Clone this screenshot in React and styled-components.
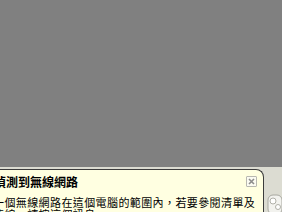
import styled, { createGlobalStyle } from 'styled-components';

const Global = createGlobalStyle`
  html, body {
    margin: 0;
    padding: 0;
    width: 282px;
    height: 212px;
    overflow: hidden;
    background: #808080;
  }
`;

const Screen = styled.div`
  width: 282px;
  height: 212px;
  display: flex;
  flex-direction: column;
  overflow: hidden;
  background: #808080;
`;

const Dimmed = styled.div`
  height: 167px;
  flex-shrink: 0;
`;

const Tray = styled.div`
  flex: 1;
  display: flex;
  align-items: flex-start;
  padding-top: 2px;
  background: #dcdcd2;
`;

const Balloon = styled.div`
  width: 264px;
  height: 60px;
  flex-shrink: 0;
  box-sizing: border-box;
  padding-top: 6px;
  background: #ffffe1;
  border-top: 1px solid #3c3c3c;
  border-right: 1px solid #3c3c3c;
  border-top-right-radius: 8px;
  overflow: hidden;
  font-family: "Noto Sans CJK TC", "Noto Sans CJK SC", sans-serif;
  color: #000;
`;

const Header = styled.div`
  display: flex;
  justify-content: space-between;
  align-items: flex-start;
  padding-right: 6px;
`;

const Title = styled.div`
  margin-left: -6px;
  font-size: 12px;
  font-weight: 700;
  line-height: 12px;
  white-space: nowrap;
`;

const Close = styled.button`
  width: 11px;
  height: 11px;
  padding: 0;
  display: flex;
  align-items: center;
  justify-content: center;
  border: 1px solid #b8b8b0;
  border-radius: 1px;
  background: #fbfbf2;
`;

const Message = styled.div`
  margin-top: 8px;
  margin-left: -7px;
  font-size: 11px;
  letter-spacing: 0.4px;
  line-height: 12px;
`;

const Line = styled.div`
  white-space: nowrap;
`;

const TrayIcon = styled.div`
  margin-left: 3px;
  margin-top: 24px;
  display: flex;
`;

export default function App() {
  return (
    <Screen>
      <Global />
      <Dimmed />
      <Tray>
        <Balloon>
          <Header>
            <Title>偵測到無線網路</Title>
            <Close aria-label="關閉">
              <svg width="7" height="7" viewBox="0 0 7 7">
                <path d="M1 1L6 6M6 1L1 6" stroke="#8c8c8c" strokeWidth="1.6" />
              </svg>
            </Close>
          </Header>
          <Message>
            <Line>一個無線網路在這個電腦的範圍內，若要參閱清單及</Line>
            <Line>連線，請按這個訊息。</Line>
          </Message>
        </Balloon>
        <TrayIcon>
          <svg width="15" height="20" viewBox="0 0 15 20">
            <rect x="1" y="2" width="14" height="19" rx="5" fill="#f2f2ee" stroke="#a8a8a0" />
            <circle cx="6" cy="8" r="3" fill="#ffffff" stroke="#b0b0a8" />
            <circle cx="11" cy="14" r="2.5" fill="#ffffff" stroke="#b0b0a8" />
          </svg>
        </TrayIcon>
      </Tray>
    </Screen>
  );
}
